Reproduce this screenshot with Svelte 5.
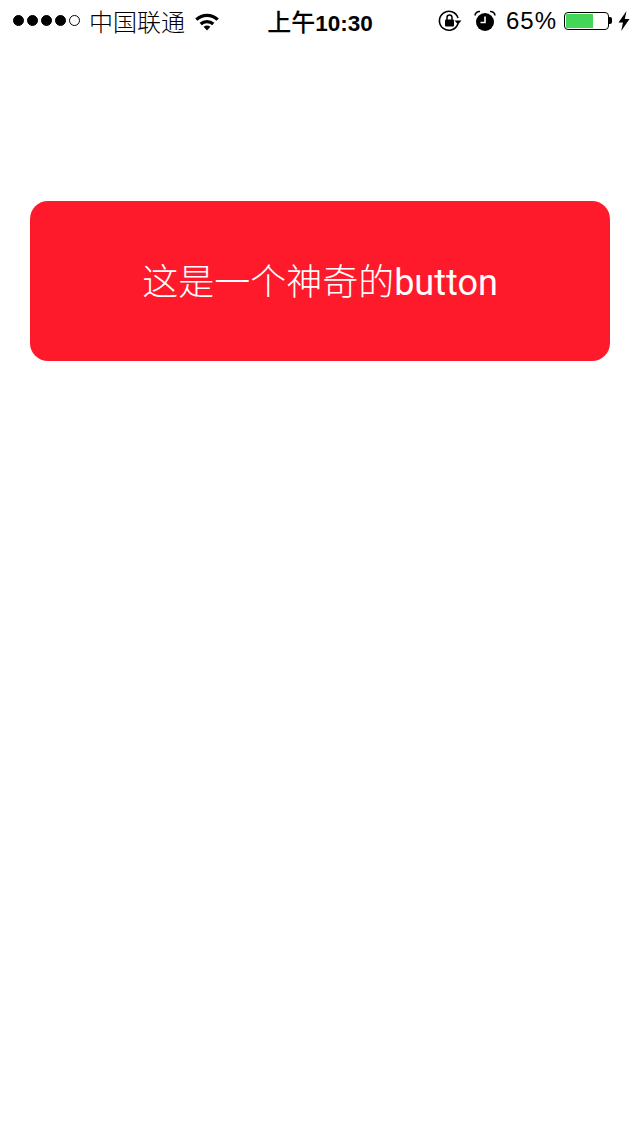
<script>
  const signal = [true, true, true, true, false];
</script>

<div class="page">
  <!-- status bar -->
  <div class="status-bar">
    <div class="left">
      <div class="signal">
        {#each signal as on}
          <span class="dot" class:on></span>
        {/each}
      </div>
      <span class="carrier">中国联通</span>
      <svg class="wifi" width="26" height="20" viewBox="0 0 26 20">
        <path d="M1.2 7.4 A17 17 0 0 1 24.8 7.4 L22.6 9.8 A14 14 0 0 0 3.4 9.8 Z" fill="#000" />
        <path d="M5.6 11.8 A11 11 0 0 1 20.4 11.8 L18.2 14.2 A8 8 0 0 0 7.8 14.2 Z" fill="#000" />
        <path d="M9.6 15.8 A5.4 5.4 0 0 1 16.4 15.8 L13 19.4 Z" fill="#000" />
      </svg>
    </div>
    <div class="time"><span class="time-cjk">上午</span>10:30</div>
    <div class="right">
      <svg class="lock" width="24" height="24" viewBox="0 0 24 24">
        <path d="M20 14.5 A9.5 9.5 0 1 1 20 9" fill="none" stroke="#000" stroke-width="1.6" />
        <path d="M16.5 11.5 H23.5 L20 15.5 Z" fill="#000" />
        <rect x="7" y="10.5" width="9" height="7" rx="1" fill="#000" />
        <path d="M9 11 V8.5 A2.5 2.5 0 0 1 14 8.5 V11" fill="none" stroke="#000" stroke-width="1.5" />
      </svg>
      <svg class="alarm" width="22" height="22" viewBox="0 0 22 22">
        <circle cx="11" cy="12" r="9" fill="#000" />
        <path d="M11 6.5 V12.5 H6.5" fill="none" stroke="#fff" stroke-width="1.6" />
        <path d="M1 5.5 A4.5 4.5 0 0 1 6 1.5 M21 5.5 A4.5 4.5 0 0 0 16 1.5" fill="none" stroke="#000" stroke-width="1.6" />
      </svg>
      <span class="percent">65%</span>
      <div class="battery">
        <div class="battery-body">
          <div class="battery-fill" style="width: 65%"></div>
        </div>
        <span class="battery-tip"></span>
      </div>
      <svg class="bolt" width="12" height="20" viewBox="0 0 12 20">
        <path d="M8.5 0 L0.5 11.5 H5 L3.2 20 L11.5 8 H6.8 Z" fill="#000" />
      </svg>
    </div>
  </div>

  <button type="button" class="magic-button">这是一个神奇的<span class="latin">button</span></button>
</div>

<style>
  :global(body) {
    margin: 0;
    background: #fff;
  }

  .page {
    min-height: 1136px;
    background: #fff;
    font-family: "Liberation Sans", "Noto Sans CJK SC", sans-serif;
    display: flex;
    flex-direction: column;
  }

  .status-bar {
    height: 41px;
    display: grid;
    grid-template-columns: 1fr auto 1fr;
    align-items: center;
    padding: 0 10px 0 13px;
    color: #000;
  }

  .left,
  .right {
    display: flex;
    align-items: center;
  }

  .right {
    justify-content: flex-end;
  }

  .signal {
    display: flex;
    gap: 3px;
  }

  .dot {
    width: 9px;
    height: 9px;
    border-radius: 50%;
    border: 1px solid #000;
  }

  .dot.on {
    background: #000;
  }

  .carrier {
    font-size: 24px;
    margin-left: 9px;
    font-weight: 300;
  }

  .wifi {
    margin-left: 9px;
  }

  .time {
    font-size: 22.5px;
    font-weight: 700;
    margin-left: -3px;
  }

  .time-cjk {
    font-size: 24px;
    font-weight: 500;
  }

  .alarm {
    margin-left: 12px;
  }

  .percent {
    font-size: 24px;
    margin-left: 10px;
    letter-spacing: 1px;
  }

  .battery {
    display: flex;
    align-items: center;
    margin-left: 7px;
  }

  .battery-body {
    width: 41px;
    height: 14px;
    padding: 1px;
    border: 1px solid #000;
    border-radius: 4px;
  }

  .battery-fill {
    height: 100%;
    background: #44d656;
    border-radius: 1px 0 0 1px;
  }

  .battery-tip {
    width: 3px;
    height: 7px;
    background: #000;
    border-radius: 0 2px 2px 0;
  }

  .bolt {
    margin-left: 6px;
  }

  .magic-button {
    margin: 160px 30px 0;
    height: 160px;
    border: none;
    border-radius: 18px;
    background: #ff1a2b;
    color: #fff;
    font-family: Roboto, "Noto Sans CJK SC", sans-serif;
    font-size: 36px;
    font-weight: 300;
    padding: 0 0 4px;
  }

  .latin {
    font-weight: 400;
  }
</style>
